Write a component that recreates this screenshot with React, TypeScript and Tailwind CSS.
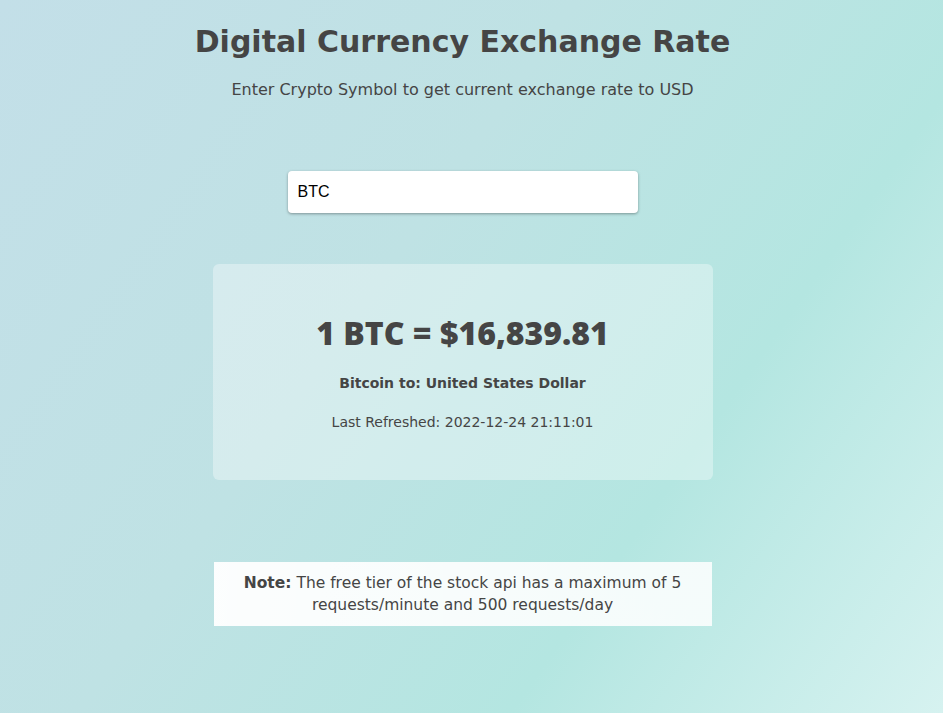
export default function App() {
  return (
    <div
      className="min-h-[713px] w-full bg-[linear-gradient(125deg,#c3dfe8_0%,#bfe2e4_40%,#b4e6e1_70%,#d6f2f0_100%)] text-[#454545]"
      style={{ fontFamily: '"DejaVu Sans", "Open Sans", sans-serif' }}
    >
      <div className="w-[925px]">
        <div className="mx-auto flex w-[500px] flex-col items-center pt-[22px]">
          <h1 className="whitespace-nowrap text-[30px] font-bold leading-[40px]">Digital Currency Exchange Rate</h1>
          <p className="mt-[16px] whitespace-nowrap text-[16px] leading-[24px]">
            Enter Crypto Symbol to get current exchange rate to USD
          </p>

          <input
            defaultValue="BTC"
            className="mt-[69px] h-[42px] w-[350px] rounded-[4px] bg-white px-[10px] text-[16px] text-black shadow-[0_1px_3px_rgba(0,0,0,0.35)] outline-none"
            style={{ fontFamily: '"Liberation Sans", Arial, sans-serif' }}
          />

          <div className="mt-[51px] flex h-[216px] w-[500px] flex-col items-center rounded-[6px] bg-white/35 pt-[49px]">
            <div
              className="whitespace-nowrap text-[32px] font-extrabold leading-[40px]"
              style={{ fontFamily: '"Open Sans", sans-serif' }}
            >
              1 BTC = $16,839.81
            </div>
            <div className="mt-[18px] whitespace-nowrap text-[14px] font-bold leading-[24px]">
              Bitcoin to: United States Dollar
            </div>
            <div className="mt-[15px] whitespace-nowrap text-[14px] leading-[24px]">
              Last Refreshed: 2022-12-24 21:11:01
            </div>
          </div>

          <div className="mt-[82px] w-[498px] bg-[linear-gradient(90deg,rgba(255,255,255,0.95),rgba(255,255,255,0.85))] px-[20px] py-[10px] text-center text-[15.5px] leading-[22px]">
            <span className="font-semibold">Note:</span> The free tier of the stock api has a maximum of 5
            requests/minute and 500 requests/day
          </div>
        </div>
      </div>
    </div>
  );
}
